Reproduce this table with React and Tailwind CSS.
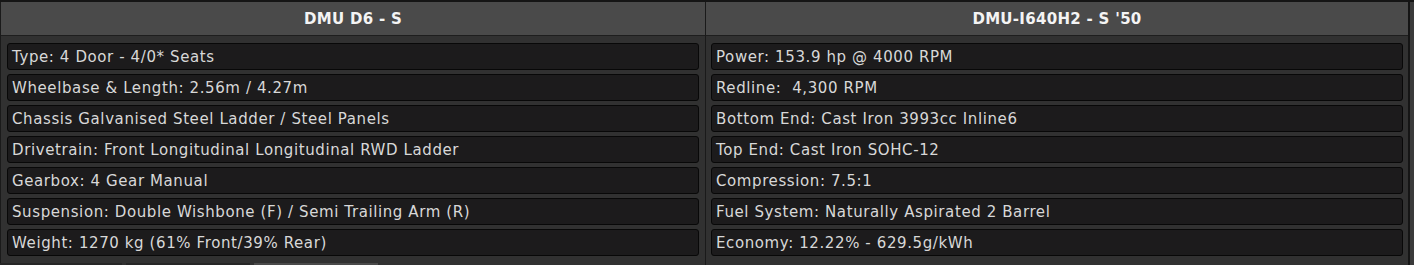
import React from "react";

const car = {
  title: "DMU D6 - S",
  specs: [
    "Type: 4 Door - 4/0* Seats",
    "Wheelbase & Length: 2.56m / 4.27m",
    "Chassis Galvanised Steel Ladder / Steel Panels",
    "Drivetrain: Front Longitudinal Longitudinal RWD Ladder",
    "Gearbox: 4 Gear Manual",
    "Suspension: Double Wishbone (F) / Semi Trailing Arm (R)",
    "Weight: 1270 kg (61% Front/39% Rear)",
  ],
};

const engine = {
  title: "DMU-I640H2 - S '50",
  specs: [
    "Power: 153.9 hp @ 4000 RPM",
    "Redline:  4,300 RPM",
    "Bottom End: Cast Iron 3993cc Inline6",
    "Top End: Cast Iron SOHC-12",
    "Compression: 7.5:1",
    "Fuel System: Naturally Aspirated 2 Barrel",
    "Economy: 12.22% - 629.5g/kWh",
  ],
};

function SpecRow({ text }) {
  return (
    <div className="h-[27px] rounded-[3px] border border-[#080808] bg-[#1c1b1c] pl-[4px] pt-[2px] flex items-center text-[15px] tracking-[0.6px] text-[#d8d8d8] whitespace-pre">
      {text}
    </div>
  );
}

function SpecColumn({ data, className }) {
  return (
    <div className={className}>
      <div className="h-[34px] bg-[#4a4a4a] border-b border-[#1e1e1e] pt-[1px] flex items-center justify-center text-[15px] tracking-[0.3px] font-bold text-[#f4f4f4]">
        {data.title}
      </div>
      <div className="flex flex-col gap-[4px] pt-[7px]">
        {data.specs.map((s) => (
          <SpecRow key={s} text={s} />
        ))}
      </div>
    </div>
  );
}

export default function App() {
  return (
    <div
      className="w-[1414px] h-[265px] bg-[#313131] border-t-2 border-[#151515] overflow-hidden relative"
      style={{ fontFamily: "'DejaVu Sans', sans-serif" }}
    >
      <div className="flex h-[263px]">
        <SpecColumn
          data={car}
          className="w-[706px] border-l border-r border-[#1a1a1a] [&>div:last-child]:pl-[6px] [&>div:last-child]:pr-[6px]"
        />
        <SpecColumn
          data={engine}
          className="w-[704px] border-r-2 border-[#151515] [&>div:last-child]:pl-[5px] [&>div:last-child]:pr-[5px]"
        />
        <div className="flex-1 bg-[#3a3a3a]" />
      </div>
      {/* tab strip peeking in at the bottom */}
      <div className="absolute left-0 bottom-0 flex gap-[4px] h-[2px]">
        <div className="w-[122px] bg-[#262626]" />
        <div className="w-[124px] bg-[#262626]" />
        <div className="w-[124px] bg-[#4a4a4a]" />
      </div>
    </div>
  );
}
